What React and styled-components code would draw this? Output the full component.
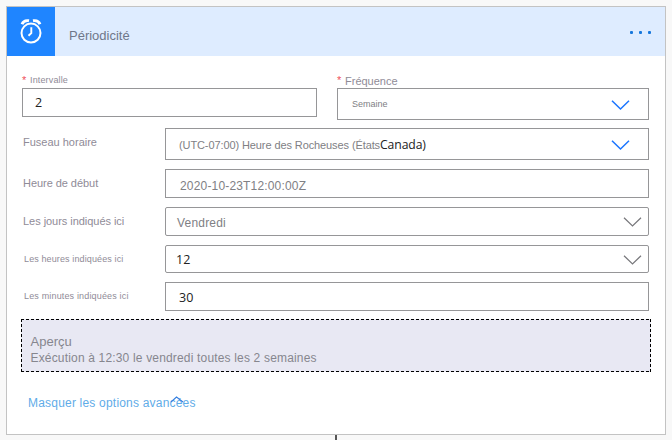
import React from 'react';
import styled, { createGlobalStyle } from 'styled-components';

const GlobalStyle = createGlobalStyle`
  body {
    margin: 0;
    background: #f8f8f8;
    font-family: "Liberation Sans", Arial, sans-serif;
  }
  *, *::before, *::after { box-sizing: border-box; }
`;

const Page = styled.main`
  height: 440px;
  padding: 6px 6px 0;
  overflow: hidden;
`;

const Card = styled.section`
  height: 429px;
  background: #fff;
  border: 1px solid #c3c3c3;
`;

const Header = styled.header`
  display: flex;
  align-items: stretch;
  height: 49px;
  background: #deecff;
`;

const IconTile = styled.div`
  width: 48px;
  background: #1f85ff;
  svg { display: block; }
`;

const Text = styled.span`
  display: block;
  white-space: nowrap;
  line-height: 16px;
  font-size: ${(p) => p.$size || 11}px;
  letter-spacing: ${(p) => p.$track || 0}px;
  color: ${(p) => p.$color || '#8f8b97'};
`;

const Title = styled(Text)`
  flex: 1;
  padding: 21px 0 0 14px;
`;

const MenuButton = styled.button`
  display: flex;
  gap: 6px;
  height: 3px;
  margin: 24px 14px 0 0;
  padding: 0;
  border: 0;
  background: none;
`;

const Dot = styled.i`
  width: 3px;
  height: 3px;
  border-radius: 1px;
  background: #1677dc;
`;

const Body = styled.div`
  padding: 16px 14px 0;
`;

const TopFields = styled.div`
  display: grid;
  grid-template-columns: 295px 312px;
  column-gap: 20px;
  margin-left: 1px;
`;

const Caption = styled.div`
  display: flex;
  height: 16px;
`;

const CaptionText = styled(Text)`
  padding-top: ${(p) => p.$top || 0}px;
`;

const Required = styled.span`
  width: ${(p) => p.$width}px;
  margin-top: ${(p) => p.$top}px;
  font-size: 11px;
  line-height: 12px;
  color: #ef4f5c;
`;

const Field = styled.div`
  display: flex;
  justify-content: space-between;
  height: ${(p) => p.$height || 29}px;
  padding-left: ${(p) => p.$inset}px;
  padding-right: ${(p) => p.$end || 0}px;
  border: 1px solid #969698;
  border-radius: ${(p) => (p.$rounded ? 2 : 0)}px;
  background: #fff;
`;

const Value = styled(Text)`
  padding-top: ${(p) => p.$top}px;
  color: #808084;
`;

const InkText = styled.span`
  font-family: "Open Sans", "Noto Sans", sans-serif;
  font-size: ${(p) => p.$size || 12}px;
  color: #222;
`;

const Rows = styled.div`
  display: flex;
  flex-direction: column;
  margin: 8px 0 0 1px;
`;

const Row = styled.div`
  display: grid;
  grid-template-columns: 143px 484px;
  margin-bottom: ${(p) => p.$gap}px;
`;

const Label = styled(Text)`
  padding: ${(p) => p.$top}px 0 0 ${(p) => p.$left || 1}px;
`;

const Chevron = styled.svg`
  display: block;
  width: 19px;
  height: 11px;
  margin-top: ${(p) => p.$top}px;
  fill: none;
  stroke: ${(p) => p.$color};
  stroke-width: ${(p) => p.$weight};
`;

const Preview = styled.div`
  width: 630px;
  height: 53px;
  padding: 14px 0 0 9.5px;
  margin-top: 8px;
  background:
    repeating-linear-gradient(90deg, #000 0 3px, transparent 3px 5px) top / 100% 1px no-repeat,
    repeating-linear-gradient(90deg, #000 0 3px, transparent 3px 5px) bottom / 100% 1px no-repeat,
    repeating-linear-gradient(180deg, #000 0 3px, transparent 3px 5px) left / 1px 100% no-repeat,
    repeating-linear-gradient(180deg, #000 0 3px, transparent 3px 5px) right / 1px 100% no-repeat,
    #e8e8f3;
`;

const PreviewLine = styled(Text)`
  line-height: 17px;
  color: #86868e;
`;

const ToggleLink = styled.a`
  position: relative;
  display: block;
  width: 170px;
  margin: 23px 0 0 7px;
`;

const ToggleArrow = styled.svg`
  position: absolute;
  left: 142px;
  top: 0;
  width: 15px;
  height: 9px;
  fill: none;
  stroke: #347fe0;
  stroke-width: 1.1;
`;

const Stem = styled.div`
  width: 2px;
  height: 5px;
  margin-left: 329px;
  background: #555;
`;

const BLUE = '#1a75ff';
const GRAY = '#77777b';

function DownArrow({ color, top, weight = 1.5 }) {
  return (
    <Chevron $color={color} $top={top} $weight={weight} viewBox="0 0 19 11">
      <path d="M1 .7 9.5 9 18 .7" />
    </Chevron>
  );
}

function AlarmIcon() {
  return (
    <svg width="48" height="48" viewBox="7 7 48 48" fill="none" stroke="#fff">
      <circle cx="31" cy="33.1" r="9.5" strokeWidth="2" />
      <path d="M31.3 27.2v5.9l-2.8 2.6" strokeWidth="1.9" />
      <path d="M22 24.2C23.2 21.2 25.8 20.2 29 20.8M40 24.2C38.8 21.2 36.2 20.2 33 20.8" strokeWidth="2.9" />
    </svg>
  );
}

export default function App() {
  return (
    <>
      <GlobalStyle />
      <Page>
        <Card>
          <Header>
            <IconTile><AlarmIcon /></IconTile>
            <Title $size={13} $color="#6f7789">Périodicité</Title>
            <MenuButton aria-label="Menu"><Dot /><Dot /><Dot /></MenuButton>
          </Header>
          <Body>
            <TopFields>
              <div>
                <Caption>
                  <Required $width={8} $top={2}>*</Required>
                  <CaptionText $size={9} $track={0.15}>Intervalle</CaptionText>
                </Caption>
                <Field $inset={12}>
                  <Value as="div" $top={6}><InkText $size={12.5}>2</InkText></Value>
                </Field>
              </div>
              <div>
                <Caption>
                  <Required $width={8} $top={2}>*</Required>
                  <CaptionText $top={1}>Fréquence</CaptionText>
                </Caption>
                <Field $height={32} $inset={14} $end={18}>
                  <Value $size={9} $top={7}>Semaine</Value>
                  <DownArrow color={BLUE} top={11} />
                </Field>
              </div>
            </TopFields>
            <Rows>
              <Row $gap={9}>
                <Label $top={6}>Fuseau horaire</Label>
                <Field $height={32} $inset={13} $end={18}>
                  <Value $track={-0.1} $top={8}>
                    (UTC-07:00) Heure des Rocheuses (États<InkText $size={12.2}>Canada)</InkText>
                  </Value>
                  <DownArrow color={BLUE} top={11} />
                </Field>
              </Row>
              <Row $gap={9}>
                <Label $top={6} $track={-0.05}>Heure de début</Label>
                <Field $inset={14}>
                  <Value $size={12} $track={0.17} $top={8}>2020-10-23T12:00:00Z</Value>
                </Field>
              </Row>
              <Row $gap={9}>
                <Label $top={6} $track={-0.04}>Les jours indiqués ici</Label>
                <Field $rounded $inset={11} $end={6}>
                  <Value $size={12} $track={0.2} $top={7}>Vendredi</Value>
                  <DownArrow color={GRAY} top={9} weight={1.2} />
                </Field>
              </Row>
              <Row $gap={9}>
                <Label $size={9} $track={0.12} $top={6} $left={2}>Les heures indiquées ici</Label>
                <Field $rounded $height={28} $inset={10} $end={6}>
                  <Value as="div" $top={6}><InkText $size={12.5}>12</InkText></Value>
                  <DownArrow color={GRAY} top={9} weight={1.2} />
                </Field>
              </Row>
              <Row $gap={0}>
                <Label $size={9} $track={0.16} $top={6} $left={2}>Les minutes indiquées ici</Label>
                <Field $inset={13}>
                  <Value as="div" $top={7}><InkText $size={12.5}>30</InkText></Value>
                </Field>
              </Row>
            </Rows>
            <Preview>
              <PreviewLine $size={13}>Aperçu</PreviewLine>
              <PreviewLine $size={12} $track={0.17}>Exécution à 12:30 le vendredi toutes les 2 semaines</PreviewLine>
            </Preview>
            <ToggleLink>
              <Text $size={12} $track={0.2} $color="#5face8">Masquer les options avancées</Text>
              <ToggleArrow viewBox="0 0 15 9"><path d="M1 7 6.5 2 13 7" /></ToggleArrow>
            </ToggleLink>
          </Body>
        </Card>
        <Stem />
      </Page>
    </>
  );
}
